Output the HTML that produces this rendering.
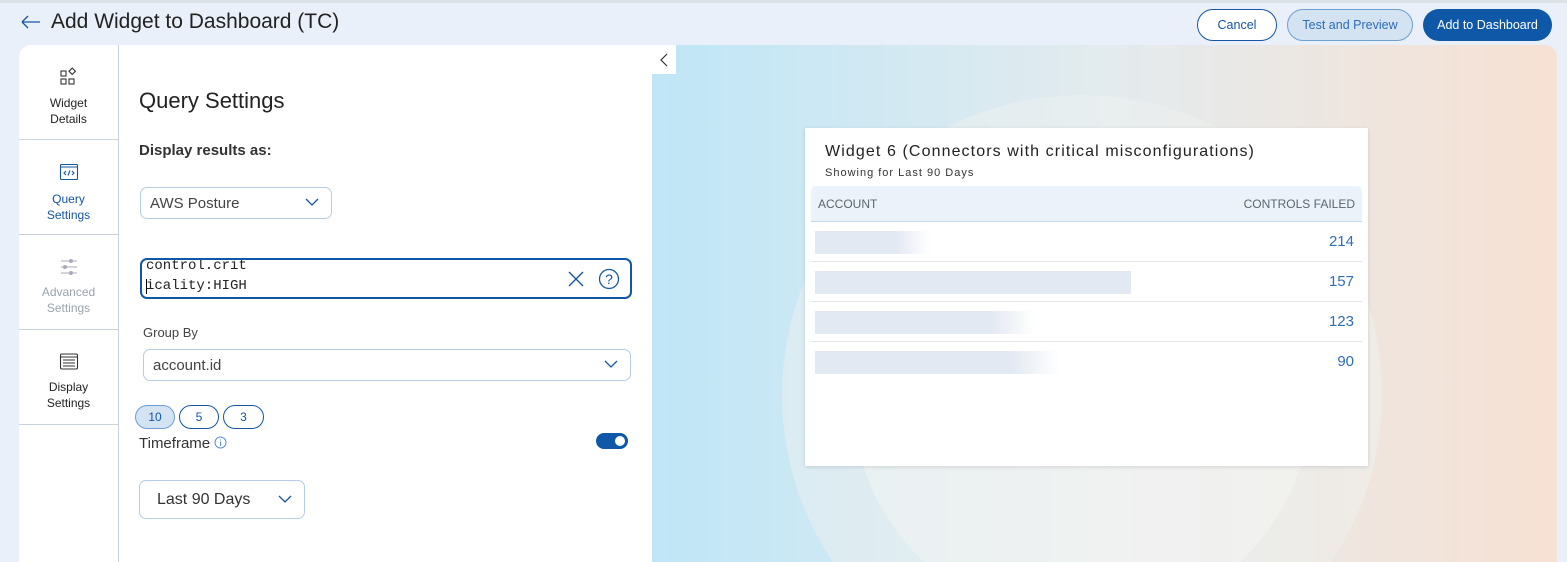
<!DOCTYPE html>
<html><head><meta charset="utf-8"><style>
*{box-sizing:border-box;margin:0;padding:0}
body{width:1567px;height:562px;overflow:hidden;background:#e9f0f9;font-family:"Liberation Sans",sans-serif;position:relative;color:#222}
.abs{position:absolute}
.btn{position:absolute;top:9px;height:32px;border-radius:16px;font-size:12.5px;display:flex;align-items:center;justify-content:center}
.side{position:absolute;left:19px;top:45px;width:100px;height:517px;background:#fff;border-right:1px solid #c9d3de;border-top-left-radius:12px}
.si{position:absolute;left:0;width:99px;height:95px;border-bottom:1px solid #c9d3de;text-align:center;font-size:12px;line-height:16px}
.sel{border:1px solid #b5cde6;border-radius:7px;background:#fff;position:absolute;display:flex;align-items:center}
.chev{position:absolute;right:12px;top:50%;margin-top:-5px}
.pill{position:absolute;top:405px;height:24px;border:1px solid #1456a3;border-radius:12px;font-size:12px;color:#1456a3;display:flex;align-items:center;justify-content:center}
.row{position:absolute;left:6px;right:6px;height:40px;border-bottom:1px solid #e3e7ec}
.blur{position:absolute;left:4px;top:9px;height:23px}
.num{position:absolute;right:8px;top:11px;font-size:15px;color:#2f6db5}
</style></head><body>
<div class="abs" style="left:0;top:0;width:1567px;height:3px;background:#dde2e8"></div>
<svg class="abs" style="left:20px;top:14px" width="22" height="16"><path d="M2 8H20M2 8L8 2M2 8L8 14" stroke="#1456a3" stroke-width="1.3" fill="none"/></svg>
<div class="abs" style="left:51px;top:10px;font-size:21px;color:#222">Add Widget to Dashboard (TC)</div>
<div class="btn" style="left:1197px;width:80px;border:1px solid #1456a3;background:#fff;color:#1456a3">Cancel</div>
<div class="btn" style="left:1287px;width:126px;border:1px solid #6e9fd2;background:#d3e3f2;color:#2f6db5">Test and Preview</div>
<div class="btn" style="left:1423px;width:129px;background:#0f58a8;color:#fff">Add to Dashboard</div>

<div class="abs" style="left:119px;top:45px;width:533px;height:517px;background:#fff"></div>
<div class="side">
 <div class="si" style="top:0">
  <svg style="margin-top:22px" width="20" height="20" viewBox="0 0 20 20" fill="none" stroke="#333" stroke-width="1.1"><rect x="2" y="4" width="5" height="5"/><rect x="2" y="12" width="5" height="5"/><rect x="10" y="12" width="5" height="5"/><rect x="11" y="2" width="4.5" height="4.5" transform="rotate(45 13.2 4.2)"/></svg>
  <div style="margin-top:4px;color:#222">Widget<br>Details</div></div>
 <div class="si" style="top:95px">
  <svg style="margin-top:23px" width="20" height="18" viewBox="0 0 20 18" fill="none" stroke="#1456a3" stroke-width="1.1"><rect x="1.5" y="1.5" width="17" height="15" rx="1"/><path d="M1.5 4H18.5M7 8L5 10L7 12M13 8L15 10L13 12M11 7.5L9 12.5"/></svg>
  <div style="margin-top:6px;color:#1456a3">Query<br>Settings</div></div>
 <div class="si" style="top:190px">
  <svg style="margin-top:22px" width="20" height="20" viewBox="0 0 20 20" stroke="#aab" stroke-width="1.1"><path d="M2 4H18M2 10H18M2 16H18"/><circle cx="12" cy="4" r="1.5" fill="#aab"/><circle cx="6" cy="10" r="1.5" fill="#aab"/><circle cx="12" cy="16" r="1.5" fill="#aab"/></svg>
  <div style="margin-top:3px;color:#9aa3ad">Advanced<br>Settings</div></div>
 <div class="si" style="top:285px">
  <svg style="margin-top:22px" width="20" height="20" viewBox="0 0 20 20" fill="none" stroke="#333" stroke-width="1.1"><rect x="1.5" y="2" width="17" height="15" rx="1.5"/><path d="M1.5 5H18.5M4 8H16M4 11H16M4 14H16"/></svg>
  <div style="margin-top:3px;color:#222">Display<br>Settings</div></div>
</div>

<div class="abs" style="left:139px;top:88px;font-size:22px;color:#222">Query Settings</div>
<div class="abs" style="left:139px;top:142px;font-size:15px;font-weight:bold;color:#333">Display results as:</div>
<div class="sel" style="left:140px;top:187px;width:192px;height:32px;padding-left:9px;font-size:15px;color:#444">AWS Posture
 <svg class="chev" width="14" height="9"><path d="M1 1L7 7L13 1" stroke="#1456a3" fill="none" stroke-width="1.3"/></svg></div>
<div class="abs" style="left:140px;top:258px;width:492px;height:41px;border:2px solid #0f58a8;border-radius:7px;overflow:hidden;font-family:'Liberation Mono',monospace;font-size:14px;color:#222">
 <div style="position:absolute;left:4px;top:-4px;line-height:20px">control.crit<br>icality:HIGH</div>
 <div style="position:absolute;left:4px;top:19px;width:1px;height:15px;background:#000"></div>
 <svg style="position:absolute;left:425px;top:10px" width="18" height="18"><path d="M2 2L16 16M16 2L2 16" stroke="#1456a3" stroke-width="1.4"/></svg>
 <svg style="position:absolute;left:456px;top:8px" width="22" height="22"><circle cx="11" cy="11" r="9.5" stroke="#1456a3" fill="none" stroke-width="1.3"/><text x="11" y="16" font-size="14" text-anchor="middle" fill="#1456a3" font-family="Liberation Sans">?</text></svg>
</div>
<div class="abs" style="left:143px;top:325px;font-size:13px;color:#444">Group By</div>
<div class="sel" style="left:143px;top:349px;width:488px;height:32px;padding-left:9px;font-size:15px;color:#444">account.id
 <svg class="chev" width="14" height="9"><path d="M1 1L7 7L13 1" stroke="#1456a3" fill="none" stroke-width="1.3"/></svg></div>
<div class="pill" style="left:135px;width:40px;background:#d3e3f2;border-color:#6e9fd2">10</div>
<div class="pill" style="left:179px;width:40px">5</div>
<div class="pill" style="left:223px;width:41px">3</div>
<div class="abs" style="left:139px;top:435px;font-size:15px;color:#333">Timeframe <svg width="13" height="13" style="vertical-align:-1px"><circle cx="6.5" cy="6.5" r="5.5" stroke="#5b8fd0" fill="none"/><path d="M6.5 5.5V10M6.5 3.5V4.5" stroke="#5b8fd0"/></svg></div>
<div class="abs" style="left:596px;top:433px;width:32px;height:16px;border-radius:8px;background:#0f58a8"><div style="position:absolute;right:3px;top:3px;width:10px;height:10px;border-radius:5px;background:#fff"></div></div>
<div class="sel" style="left:139px;top:480px;width:166px;height:39px;padding-left:17px;font-size:16px;color:#333">Last 90 Days
 <svg class="chev" width="14" height="9"><path d="M1 1L7 7L13 1" stroke="#1456a3" fill="none" stroke-width="1.3"/></svg></div>

<div class="abs" style="left:652px;top:45px;width:905px;height:517px;overflow:hidden;border-top-right-radius:12px;background:linear-gradient(90deg,#bfe6f7 0%,#e3ebee 50%,#f7e1d3 100%)">
 <div style="position:absolute;left:130px;top:50px;width:600px;height:600px;border-radius:50%;background:rgba(240,242,240,0.45)"></div>
 <div style="position:absolute;left:200px;top:120px;width:460px;height:460px;border-radius:50%;background:rgba(246,246,244,0.5)"></div>
</div>
<div class="abs" style="left:652px;top:45px;width:24px;height:29px;background:#fff"><svg style="margin:8px 0 0 8px" width="8" height="14"><path d="M7 1L1 7L7 13" stroke="#333" fill="none" stroke-width="1.2"/></svg></div>

<div class="abs" style="left:805px;top:128px;width:563px;height:338px;background:#fff;box-shadow:0 1px 4px rgba(0,0,0,0.12)">
 <div style="position:absolute;left:20px;top:15px;font-size:16px;color:#222;letter-spacing:1.1px">Widget 6 (Connectors with critical misconfigurations)</div>
 <div style="position:absolute;left:20px;top:39px;font-size:11px;color:#333;letter-spacing:1px">Showing for Last 90 Days</div>
 <div style="position:absolute;left:6px;right:6px;top:58px;height:36px;background:#ecf2fa;border-bottom:1px solid #c5d9ea;border-radius:5px 5px 0 0;font-size:12px;color:#5a6670">
  <span style="position:absolute;left:7px;top:11px">ACCOUNT</span><span style="position:absolute;right:7px;top:11px">CONTROLS FAILED</span></div>
 <div class="row" style="top:94px"><div class="blur" style="width:115px;background:linear-gradient(90deg,#e3e9f2 70%,#fff)"></div><div class="num">214</div></div>
 <div class="row" style="top:134px"><div class="blur" style="width:316px;background:#e3e9f2"></div><div class="num">157</div></div>
 <div class="row" style="top:174px"><div class="blur" style="width:220px;background:linear-gradient(90deg,#e3e9f2 80%,#fff)"></div><div class="num">123</div></div>
 <div class="row" style="top:214px;border:none"><div class="blur" style="width:245px;background:linear-gradient(90deg,#e3e9f2 80%,#fff)"></div><div class="num">90</div></div>
</div>
</body></html>
